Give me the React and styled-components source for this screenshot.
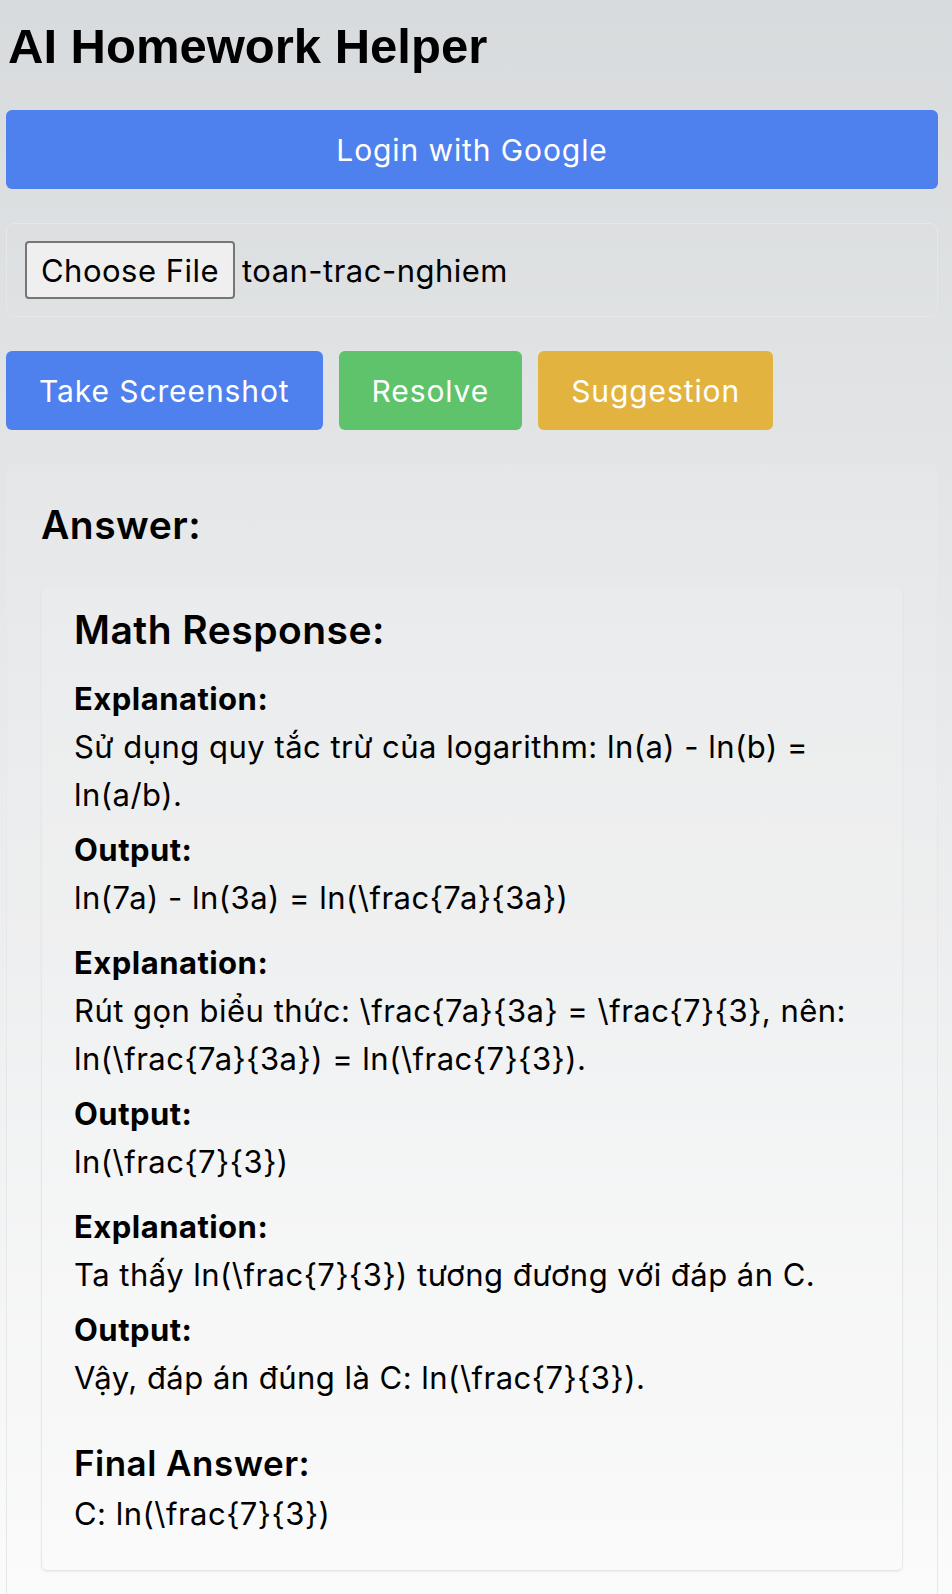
import React from 'react';
import styled, { createGlobalStyle } from 'styled-components';

const steps = [
  {
    explanation: 'Sử dụng quy tắc trừ của logarithm: ln(a) - ln(b) = ln(a/b).',
    output: 'ln(7a) - ln(3a) = ln(\\frac{7a}{3a})',
  },
  {
    explanation:
      'Rút gọn biểu thức: \\frac{7a}{3a} = \\frac{7}{3}, nên: ln(\\frac{7a}{3a}) = ln(\\frac{7}{3}).',
    output: 'ln(\\frac{7}{3})',
  },
  {
    explanation: 'Ta thấy ln(\\frac{7}{3}) tương đương với đáp án C.',
    output: 'Vậy, đáp án đúng là C: ln(\\frac{7}{3}).',
  },
];

const App = () => (
  <>
    <GlobalStyle />
    <Page>
      <Title>AI Homework Helper</Title>

      <LoginButton>Login with Google</LoginButton>

      <FileBox>
        <ChooseButton>Choose File</ChooseButton>
        <FileName>toan-trac-nghiem</FileName>
      </FileBox>

      <Actions>
        <ActionButton $bg="#4f81ee">Take Screenshot</ActionButton>
        <ActionButton $bg="#5ec36b">Resolve</ActionButton>
        <ActionButton $bg="#e2b43f">Suggestion</ActionButton>
      </Actions>

      <AnswerBox>
        <AnswerTitle>Answer:</AnswerTitle>

        <Card>
          <CardTitle>Math Response:</CardTitle>

          <Steps>
            {steps.map((step, i) => (
              <Step key={i}>
                <Label>Explanation:</Label>
                <Text>{step.explanation}</Text>
                <Label $gap>Output:</Label>
                <Text>{step.output}</Text>
              </Step>
            ))}
          </Steps>

          <FinalTitle>Final Answer:</FinalTitle>
          <Text>C: ln(\frac{'{7}'}{'{3}'})</Text>
        </Card>
      </AnswerBox>
    </Page>
  </>
);

export default App;

const GlobalStyle = createGlobalStyle`
  html, body {
    margin: 0;
    padding: 0;
  }

  body {
    min-height: 100vh;
    background: linear-gradient(180deg, #d8dbdd 0%, #fbfbfb 100%) fixed;
    font-family: Inter, "Noto Sans", sans-serif;
    letter-spacing: 0.03em;
    color: #000;
  }
`;

const Page = styled.div`
  display: flex;
  flex-direction: column;
  padding: 19px 14px 0 6px;
`;

const Title = styled.h1`
  margin: 0 0 36px 2px;
  font-family: "Liberation Sans", Arial, sans-serif;
  font-size: 49px;
  line-height: 55px;
  font-weight: 700;
  letter-spacing: normal;
`;

const LoginButton = styled.button`
  height: 79px;
  margin-bottom: 34px;
  border: none;
  border-radius: 6px;
  background: #4f81ee;
  color: #fff;
  font-family: Inter, sans-serif;
  font-size: 30px;
  letter-spacing: 0.03em;
`;

const FileBox = styled.div`
  display: flex;
  align-items: center;
  gap: 7px;
  padding: 17px 18px;
  margin-bottom: 34px;
  border: 1px solid #e5e7eb;
  border-radius: 8px;
`;

const ChooseButton = styled.span`
  display: inline-flex;
  align-items: center;
  height: 54px;
  padding: 0 14px;
  border: 2px solid #767676;
  border-radius: 4px;
  background: #efefef;
  font-size: 31px;
`;

const FileName = styled.span`
  font-size: 31px;
`;

const Actions = styled.div`
  display: flex;
  gap: 16px;
  margin-bottom: 34px;
`;

const ActionButton = styled.button`
  height: 79px;
  padding: 0 33px;
  border: none;
  border-radius: 6px;
  background: ${(p) => p.$bg};
  color: #fff;
  font-family: Inter, sans-serif;
  font-size: 30px;
  letter-spacing: 0.03em;
`;

const AnswerBox = styled.section`
  padding: 37px 34px 60px;
  border: 1px solid #e5e7eb;
  border-radius: 8px;
  background: rgba(255, 255, 255, 0.1);
`;

const AnswerTitle = styled.h2`
  margin: 0 0 38px;
  font-size: 39px;
  line-height: 46px;
  font-weight: 600;
`;

const Card = styled.div`
  padding: 20px 32px 32px;
  border: 1px solid #e5e7eb;
  border-radius: 6px;
  box-shadow: 0 1px 2px rgba(0, 0, 0, 0.06);
  background: rgba(255, 255, 255, 0.1);
`;

const CardTitle = styled.h3`
  margin: 0 0 22px;
  font-size: 39px;
  line-height: 46px;
  font-weight: 600;
`;

const Steps = styled.div`
  display: flex;
  flex-direction: column;
  gap: 17px;
`;

const Step = styled.div``;

const Label = styled.div`
  margin-top: ${(p) => (p.$gap ? '7px' : '0')};
  font-size: 31px;
  line-height: 48px;
  font-weight: 700;
`;

const Text = styled.p`
  margin: 0;
  font-size: 31px;
  line-height: 48px;
`;

const FinalTitle = styled.h4`
  margin: 41px 0 7px;
  font-size: 35px;
  line-height: 40px;
  font-weight: 600;
`;
